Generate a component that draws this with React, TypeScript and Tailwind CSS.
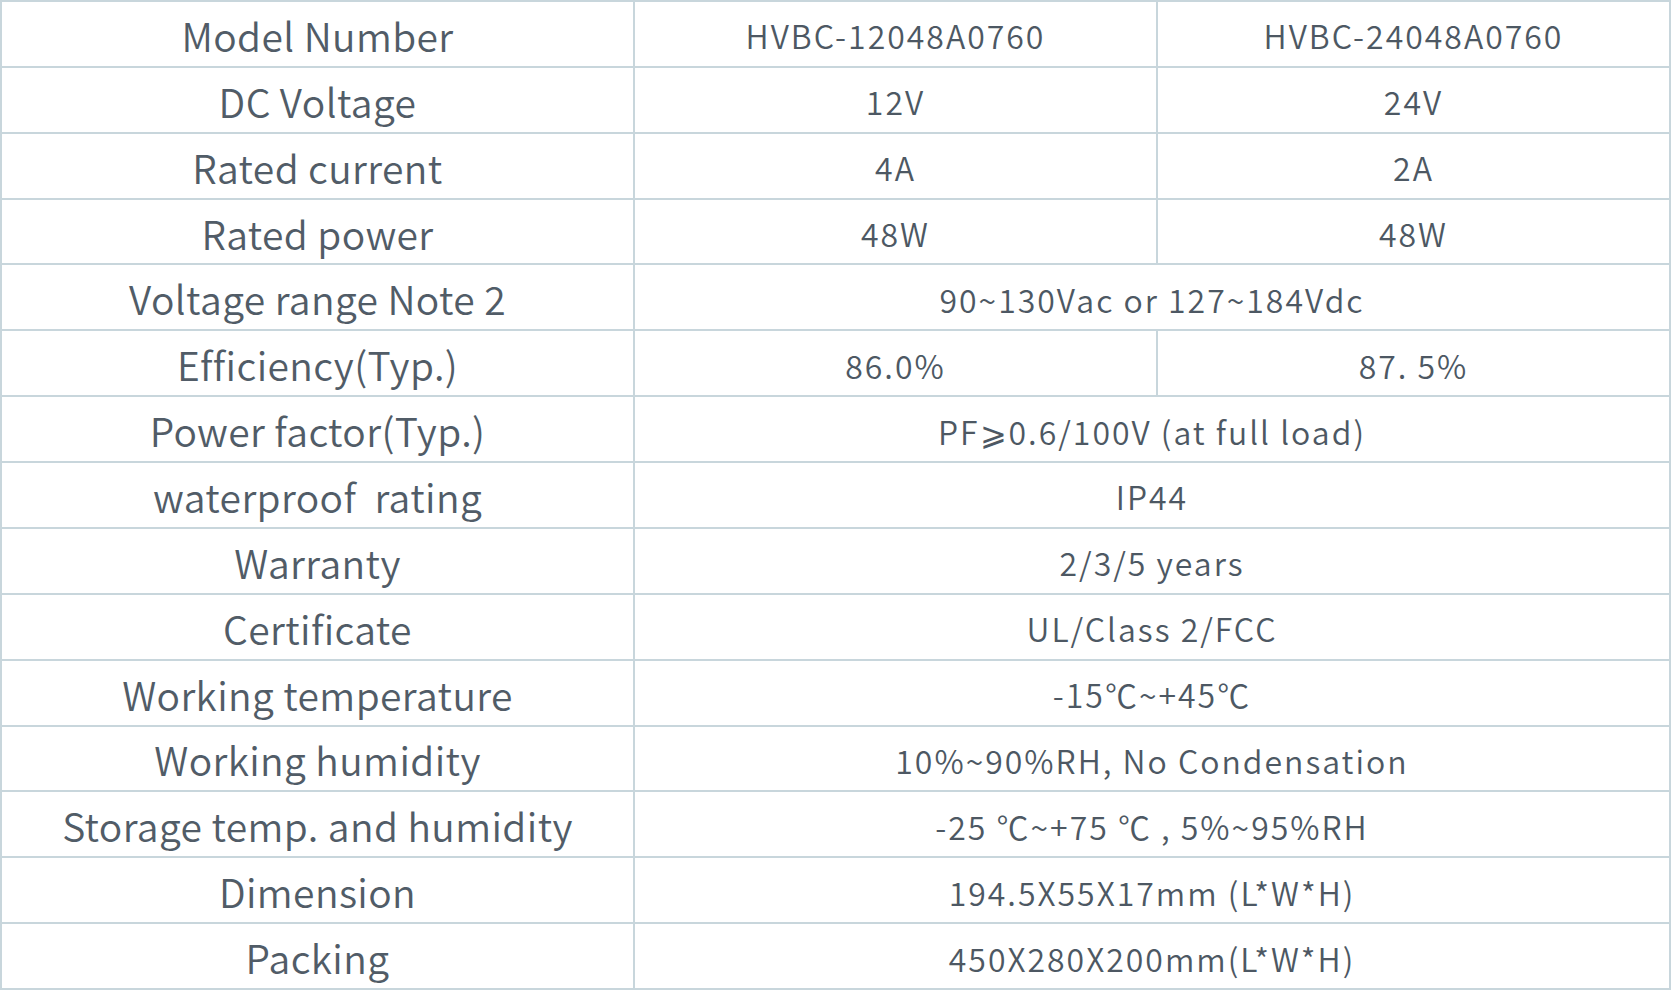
import React from 'react';

type Row = { label: string; a: string; b?: string };

const rows: Row[] = [
  { label: 'Model Number', a: 'HVBC-12048A0760', b: 'HVBC-24048A0760' },
  { label: 'DC Voltage', a: '12V', b: '24V' },
  { label: 'Rated current', a: '4A', b: '2A' },
  { label: 'Rated power', a: '48W', b: '48W' },
  { label: 'Voltage range Note 2', a: '90~130Vac or 127~184Vdc' },
  { label: 'Efficiency(Typ.)', a: '86.0%', b: '87. 5%' },
  { label: 'Power factor(Typ.)', a: 'PF⩾0.6/100V (at full load)' },
  { label: 'waterproof\u00a0 rating', a: 'IP44' },
  { label: 'Warranty', a: '2/3/5 years' },
  { label: 'Certificate', a: 'UL/Class 2/FCC' },
  { label: 'Working temperature', a: '-15℃~+45℃' },
  { label: 'Working humidity', a: '10%~90%RH, No Condensation' },
  { label: 'Storage temp. and humidity', a: '-25 ℃~+75 ℃ , 5%~95%RH' },
  { label: 'Dimension', a: '194.5X55X17mm (L*W*H)' },
  { label: 'Packing', a: '450X280X200mm(L*W*H)' },
];

const cell =
  'flex items-center justify-center pt-[3px] border-r-2 border-b-2 border-[#c8d6dc] whitespace-pre';
const label = `${cell} text-[39px] tracking-[0.4px] font-[350] text-[#515c67]`;
const value = `${cell} text-[32px] tracking-[2px] font-[350]`;

const App: React.FC = () => {
  return (
    <div className="w-[1671px] h-[990px] bg-white">
      <div
        className="grid h-full grid-cols-[633px_523px_1fr] grid-rows-[repeat(15,1fr)] border-t-2 border-l-2 border-[#c8d6dc] leading-none text-[#4d5863]"
        style={{ fontFamily: '"Noto Sans CJK SC", "Noto Sans", sans-serif' }}
      >
        {rows.map((r) => (
          <React.Fragment key={r.label}>
            <div className={label}>{r.label}</div>
            {r.b !== undefined ? (
              <>
                <div className={value}>{r.a}</div>
                <div className={value}>{r.b}</div>
              </>
            ) : (
              <div className={`${value} col-span-2`}>{r.a}</div>
            )}
          </React.Fragment>
        ))}
      </div>
    </div>
  );
};

export default App;
